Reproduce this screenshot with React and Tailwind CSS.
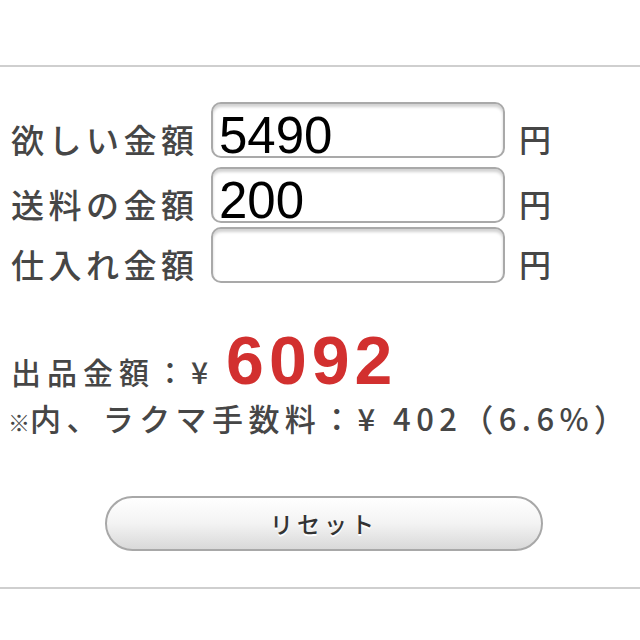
export default function App() {
  const rows = [
    { label: "欲しい金額", value: "5490", mt: "mt-[35px]" },
    { label: "送料の金額", value: "200", mt: "mt-[9px]" },
    { label: "仕入れ金額", value: "", mt: "mt-[4px]" },
  ];
  return (
    <div className="w-[640px] h-[640px] bg-white overflow-hidden text-[#464646] font-['Noto_Sans_CJK_JP',sans-serif]">
      <div className="h-[65px]" />
      <div className="border-t-2 border-[#cfcfcf]" />
      {rows.map((r) => (
        <div key={r.label} className={`flex items-end h-[56px] ${r.mt}`}>
          <div className="w-[211px] shrink-0 pl-[11px] text-[33px] font-medium leading-none tracking-[4.5px] whitespace-nowrap mb-[2px]">
            {r.label}
          </div>
          <div className="w-[294px] shrink-0 h-[56px] rounded-[10px] border-2 border-[#a9a9a9] bg-white shadow-[inset_0_3px_3px_rgba(0,0,0,0.18)] pl-[6px] pt-[6px] text-[51px] leading-none text-black font-['Liberation_Sans',Arial,sans-serif] overflow-visible">
            {r.value}
          </div>
          <div className="ml-[14px] text-[32px] font-medium leading-none mb-[4px]">円</div>
        </div>
      ))}
      <div className="mt-[43px] pl-[11px] flex items-baseline whitespace-nowrap">
        <span className="text-[30px] font-medium leading-none tracking-[6px]">出品金額：¥</span>
        <span className="ml-[12px] text-[68px] leading-none font-bold tracking-[5px] text-[#d2302f] font-['Liberation_Sans',Arial,sans-serif]">
          6092
        </span>
      </div>
      <div className="mt-[8px] pl-[8px] flex items-baseline whitespace-nowrap">
        <span className="text-[22px] leading-none font-bold">※</span>
        <span className="text-[31px] font-medium leading-none tracking-[5.4px]">内、ラクマ手数料：¥ 402（6.6%）</span>
      </div>
      <div className="mt-[63px] flex">
        <button className="ml-[105px] w-[438px] h-[55px] rounded-full border-2 border-[#a8a8a8] bg-gradient-to-b from-white via-[#f3f3f3] to-[#d9d9d9] text-[23px] font-medium leading-none tracking-[4px] text-[#333] [text-shadow:0_2px_0_#fff] font-['Noto_Sans_CJK_JP',sans-serif]">
          リセット
        </button>
      </div>
      <div className="mt-[36px] border-t-2 border-[#cfcfcf]" />
    </div>
  );
}
